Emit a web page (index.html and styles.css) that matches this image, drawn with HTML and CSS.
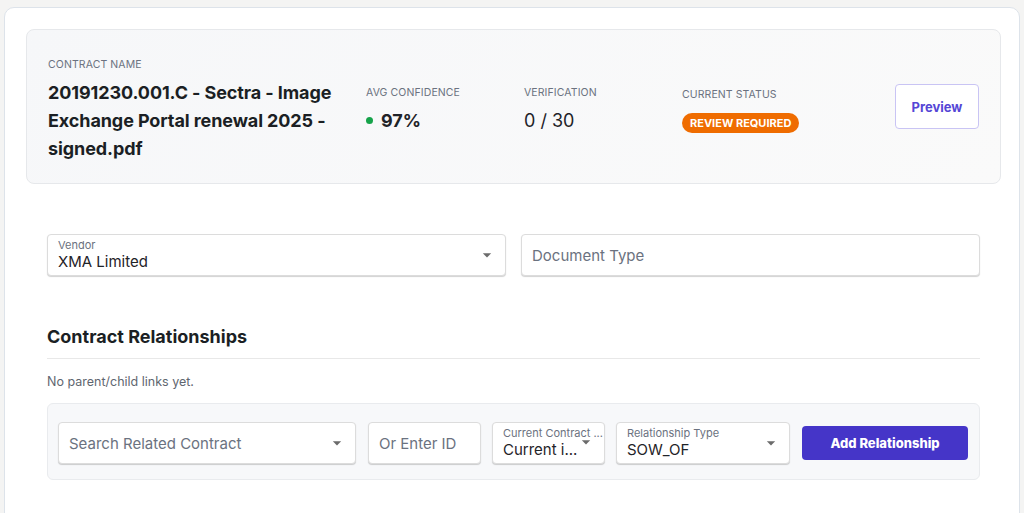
FILE: index.html
```html
<!DOCTYPE html>
<html lang="en">
<head>
  <meta charset="UTF-8" />
  <meta name="viewport" content="width=device-width, initial-scale=1.0"/>
  <title>Contract Review</title>
  <link rel="stylesheet" href="styles.css">
</head>
<body>
  <div class="page-card">

    <div class="summary">
      <div class="col col-name">
        <div class="label">Contract Name</div>
        <div class="title">20191230.001.C - Sectra - Image Exchange Portal renewal 2025 - signed.pdf</div>
      </div>
      <div class="col col-metric">
        <div class="label">Avg Confidence</div>
        <div class="value strong"><span class="dot"></span>97%</div>
      </div>
      <div class="col col-metric">
        <div class="label">Verification</div>
        <div class="value">0 / 30</div>
      </div>
      <div class="col col-status">
        <div class="label">Current Status</div>
        <span class="badge">Review Required</span>
      </div>
      <button class="btn-outline">Preview</button>
    </div>

    <div class="details">
      <div class="row-two">
        <div class="field has-label">
          <div class="field-text">
            <span class="field-label">Vendor</span>
            <span class="field-value">XMA Limited</span>
          </div>
          <svg class="caret" viewBox="0 0 24 24"><path d="M7 10l5 5 5-5z"/></svg>
        </div>
        <div class="field">
          <span class="placeholder">Document Type</span>
        </div>
      </div>

      <h2 class="section-title">Contract Relationships</h2>
      <p class="muted">No parent/child links yet.</p>

      <div class="rel-panel">
        <div class="field f-search">
          <span class="placeholder">Search Related Contract</span>
          <svg class="caret" viewBox="0 0 24 24"><path d="M7 10l5 5 5-5z"/></svg>
        </div>
        <div class="field f-id">
          <span class="placeholder">Or Enter ID</span>
        </div>
        <div class="field has-label f-current">
          <div class="field-text">
            <span class="field-label">Current Contract ...</span>
            <span class="field-value">Current i...</span>
          </div>
          <svg class="caret caret-top" viewBox="0 0 24 24"><path d="M7 10l5 5 5-5z"/></svg>
        </div>
        <div class="field has-label f-type">
          <div class="field-text">
            <span class="field-label">Relationship Type</span>
            <span class="field-value">SOW_OF</span>
          </div>
          <svg class="caret" viewBox="0 0 24 24"><path d="M7 10l5 5 5-5z"/></svg>
        </div>
        <button class="btn-primary">Add Relationship</button>
      </div>
    </div>

  </div>
</body>
</html>
```

FILE: styles.css
```css
body {
  margin: 0;
  padding: 7px 4px 0 4px;
  background-color: #f4f4f3;
  font-family: Inter, "Noto Sans", Arial, sans-serif;
  color: #1f2328;
  height: 506px;
  overflow: hidden;
}

.page-card {
  background: #fff;
  border: 1px solid #dde3ea;
  border-radius: 10px;
  padding: 21px 18px 40px 21px;
  min-height: 520px;
  box-sizing: border-box;
}

/* summary header */
.summary {
  display: flex;
  align-items: center;
  height: 155px;
  box-sizing: border-box;
  padding: 6px 21px 0 21px;
  background: linear-gradient(135deg, #f6f7f9 0%, #fafafa 100%);
  border: 1px solid #e6e8eb;
  border-radius: 8px;
}
.col-name {
  width: 298px;
  margin-right: 20px;
}
.col-metric {
  width: 139px;
  margin-right: 19px;
}
.col-status {
  flex: 1;
}
.label {
  font-size: 10.5px;
  line-height: 16px;
  text-transform: uppercase;
  color: #6b7280;
  letter-spacing: 0.1px;
}
.title {
  margin-top: 6px;
  font-size: 18px;
  line-height: 28px;
  font-weight: 700;
  color: #1b1f24;
  letter-spacing: -0.1px;
}
.value {
  margin-top: 6px;
  font-size: 18px;
  line-height: 28px;
  color: #1f2328;
}
.value.strong {
  font-weight: 700;
}
.dot {
  display: inline-block;
  width: 7px;
  height: 7px;
  border-radius: 50%;
  background: #16a34a;
  margin: 0 8px 0 0;
  vertical-align: 3px;
}
.badge {
  display: block;
  width: fit-content;
  margin-top: 10px;
  padding: 0 8px;
  height: 20px;
  line-height: 20px;
  border-radius: 10px;
  background: #ef6c00;
  color: #fff;
  font-size: 11px;
  font-weight: 700;
  text-transform: uppercase;
}
.btn-outline {
  width: 84px;
  height: 45px;
  margin-top: -6px;
  background: #fff;
  border: 1px solid #c9c4f4;
  border-radius: 4px;
  color: #5546d6;
  font-family: inherit;
  font-size: 13px;
  font-weight: 700;
}

/* form area */
.details {
  padding: 50px 21px 0 21px;
}
.row-two {
  display: flex;
  gap: 15px;
}
.row-two .field {
  flex: 1;
}
.field {
  display: flex;
  align-items: center;
  height: 42px;
  box-sizing: border-box;
  padding: 0 8px 0 10px;
  background: #fff;
  border: 1px solid #dcdcdc;
  border-radius: 4px;
  box-shadow: 0 1px 1px rgba(0, 0, 0, 0.18);
}
.field-text {
  flex: 1;
  display: flex;
  flex-direction: column;
  min-width: 0;
}
.field-label {
  font-size: 11px;
  line-height: 13px;
  color: #6b7280;
  white-space: nowrap;
}
.field-value {
  font-size: 15px;
  line-height: 20px;
  color: #1f2328;
  white-space: nowrap;
}
.placeholder {
  flex: 1;
  font-size: 15px;
  color: #6b7280;
  white-space: nowrap;
}
.caret {
  width: 20px;
  height: 20px;
  fill: #6b6b6b;
  flex: none;
}
.caret-top {
  align-self: flex-start;
  margin-top: 9px;
  margin-left: -12px;
}

.section-title {
  margin: 49px 0 0 0;
  padding-bottom: 9px;
  font-size: 18px;
  line-height: 24px;
  font-weight: 700;
  color: #1b1f24;
  border-bottom: 1px solid #e8e8e8;
}
.muted {
  margin: 15px 0 0 0;
  font-size: 12.5px;
  line-height: 16px;
  color: #5f6670;
}

.rel-panel {
  display: flex;
  align-items: center;
  gap: 11px;
  margin-top: 13px;
  padding: 18px 11px 15px 10px;
  background: #f7f8fa;
  border: 1px solid #e9ebee;
  border-radius: 6px;
}
.f-search { width: 298px; }
.f-id { width: 113px; margin-left: 1px; }
.f-current { width: 113px; }
.f-type { width: 174px; }
.btn-primary {
  width: 166px;
  height: 34px;
  margin-left: 1px;
  background: #4535c8;
  border: none;
  border-radius: 4px;
  color: #fff;
  font-family: inherit;
  font-size: 13px;
  font-weight: 800;
}
```
